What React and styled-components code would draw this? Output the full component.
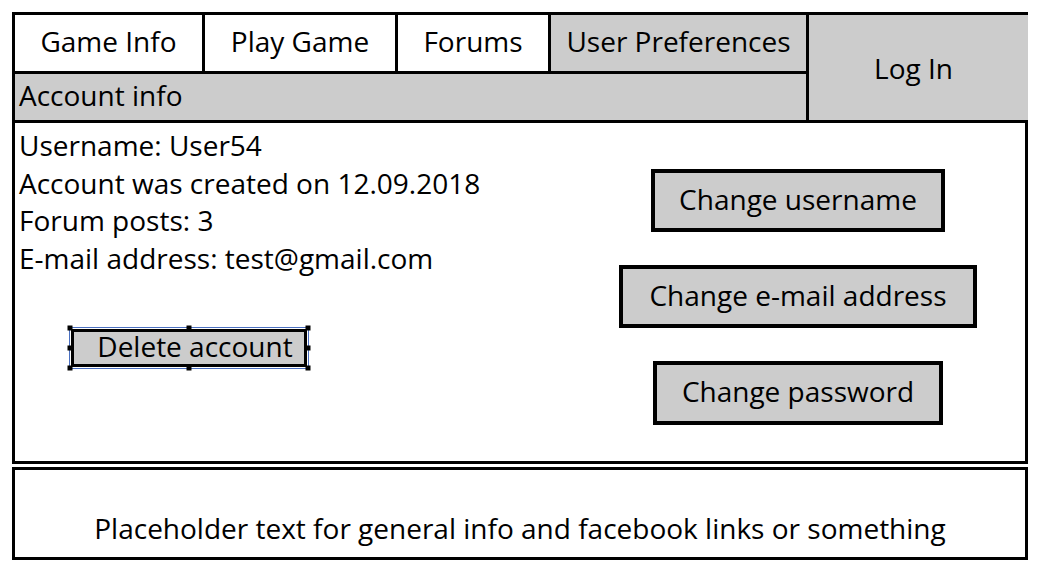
import React from 'react';
import styled, { createGlobalStyle } from 'styled-components';

const Global = createGlobalStyle`
  body {
    margin: 0;
    background: #ffffff;
    font-family: 'Open Sans', 'Noto Sans', sans-serif;
    color: #000000;
  }
`;

const Page = styled.div`
  width: 1016px;
  padding: 12px 0 0 12px;
  display: flex;
  flex-direction: column;
`;

const Header = styled.div`
  display: grid;
  grid-template-columns: 791px 219px;
  grid-template-rows: 56px 46px;
  gap: 3px;
  padding: 3px;
  background: #000000;
`;

const Tabs = styled.div`
  display: flex;
  gap: 3px;
`;

const Tab = styled.div`
  width: ${(p) => p.w}px;
  display: flex;
  align-items: center;
  justify-content: center;
  padding-bottom: 4px;
  font-size: 28px;
  background: ${(p) => (p.active ? '#cccccc' : '#ffffff')};
`;

const AccountBar = styled.div`
  grid-column: 1;
  grid-row: 2;
  background: #cccccc;
  display: flex;
  align-items: center;
  padding: 0 0 4px 4px;
  font-size: 28px;
`;

const LogIn = styled.div`
  grid-column: 2;
  grid-row: 1 / span 2;
  background: #cccccc;
  display: flex;
  align-items: center;
  justify-content: center;
  font-size: 28px;
  padding: 0 10px 0 0;
`;

const Content = styled.div`
  height: 338px;
  border: 3px solid #000000;
  border-top: none;
  display: flex;
`;

const Info = styled.div`
  flex: 1;
  padding: 4px 0 0 4px;
  display: flex;
  flex-direction: column;
`;

const Line = styled.div`
  font-size: 28px;
  line-height: 37.5px;
  white-space: nowrap;
`;

const Selection = styled.div`
  position: relative;
  align-self: flex-start;
  margin: 50px 0 0 50px;
  border: 1px solid #4a6fc0;
  padding: 1px;
`;

const Handle = styled.span`
  position: absolute;
  width: 5px;
  height: 5px;
  background: #000000;
  left: ${(p) => p.x};
  top: ${(p) => p.y};
  transform: translate(-50%, -50%);
`;

const Button = styled.div`
  background: #cccccc;
  border: 4px solid #000000;
  font-size: 28px;
  display: flex;
  align-items: center;
  justify-content: center;
  width: ${(p) => p.w}px;
  height: ${(p) => p.h}px;
  box-sizing: border-box;
  padding-bottom: 4px;
  white-space: nowrap;
`;

const SmallButton = styled(Button)`
  border-width: 3px;
  padding-left: 12px;
`;

const Actions = styled.div`
  width: 454px;
  display: flex;
  flex-direction: column;
  align-items: center;
  gap: 33px;
  padding-top: 46px;
`;

const Footer = styled.div`
  margin-top: 3px;
  height: 93px;
  box-sizing: border-box;
  border: 3px solid #000000;
  display: flex;
  align-items: flex-end;
  justify-content: center;
  padding-bottom: 10px;
  font-size: 28px;
  white-space: nowrap;
`;

const handles = [
  ['0%', '0%'], ['50%', '0%'], ['100%', '0%'],
  ['0%', '50%'], ['100%', '50%'],
  ['0%', '100%'], ['50%', '100%'], ['100%', '100%'],
];

export default function App() {
  return (
    <>
      <Global />
      <Page>
        <Header>
          <Tabs>
            <Tab w={187}>Game Info</Tab>
            <Tab w={190}>Play Game</Tab>
            <Tab w={150}>Forums</Tab>
            <Tab w={255} active>User Preferences</Tab>
          </Tabs>
          <AccountBar>Account info</AccountBar>
          <LogIn>Log In</LogIn>
        </Header>
        <Content>
          <Info>
            <Line>Username: User54</Line>
            <Line>Account was created on 12.09.2018</Line>
            <Line>Forum posts: 3</Line>
            <Line>E-mail address: test@gmail.com</Line>
            <Selection>
              <SmallButton w={236} h={38}>Delete account</SmallButton>
              {handles.map(([x, y], i) => (
                <Handle key={i} x={x} y={y} />
              ))}
            </Selection>
          </Info>
          <Actions>
            <Button w={294} h={63}>Change username</Button>
            <Button w={358} h={63}>Change e-mail address</Button>
            <Button w={290} h={64}>Change password</Button>
          </Actions>
        </Content>
        <Footer>Placeholder text for general info and facebook links or something</Footer>
      </Page>
    </>
  );
}
